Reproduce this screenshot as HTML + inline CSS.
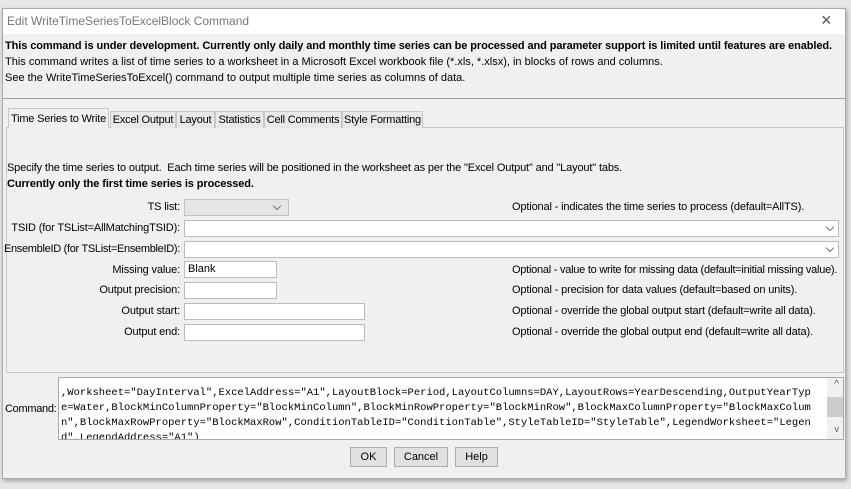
<!DOCTYPE html>
<html><head><style>
*{margin:0;padding:0;box-sizing:border-box}
body{width:851px;height:489px;background:#e6e6e6;font-family:"Liberation Sans",sans-serif;font-size:11px;color:#000;position:relative;overflow:hidden}
.a{position:absolute;white-space:nowrap}
#dlg{position:absolute;left:2px;top:8px;width:844px;height:471px;background:#f0f0f0;border:1px solid #aaa;box-shadow:1px 2px 4px rgba(0,0,0,.3)}
#tb{position:absolute;left:0;top:0;width:842px;height:25px;background:#fff}
.in{position:absolute;background:#fff;border:1px solid #bcbcbc;height:17px;padding:1px 3px}
.r{text-align:right;letter-spacing:-0.15px}
.d{letter-spacing:-0.15px}
.tab{position:absolute;top:102px;height:17px;border:1px solid #c8c8c8;border-bottom:none;background:#e8e8e8;padding:2px 0;font-size:11px;text-align:center;letter-spacing:-0.2px}
.btn{position:absolute;top:438px;height:20px;border:1px solid #adadad;background:#e1e1e1;text-align:center;line-height:18px}
.chev{position:absolute;width:6px;height:6px;border-right:1px solid #777;border-bottom:1px solid #777;transform:rotate(45deg)}
</style></head><body>
<div id="dlg">
<div id="tb"><div class="a" style="left:4px;top:5px;font-size:12px;color:#777">Edit WriteTimeSeriesToExcelBlock Command</div>
<div class="a" style="left:818px;top:1px;font-size:18px;color:#555;font-weight:300">×</div></div>
<div class="a" style="left:2px;top:31px;font-weight:bold;letter-spacing:-0.09px">This command is under development. Currently only daily and monthly time series can be processed and parameter support is limited until features are enabled.</div>
<div class="a" style="left:2px;top:47px">This command writes a list of time series to a worksheet in a Microsoft Excel workbook file (*.xls, *.xlsx), in blocks of rows and columns.</div>
<div class="a" style="left:2px;top:63px">See the WriteTimeSeriesToExcel() command to output multiple time series as columns of data.</div>
<div class="a" style="left:0;top:89px;width:842px;height:1px;background:#a0a0a0"></div>
<div class="a" style="left:3px;top:118px;width:838px;height:246px;border:1px solid #c8c8c8;background:#f0f0f0"></div>
<div class="tab" style="left:5px;width:101px;top:99px;height:20px;background:#f0f0f0;padding-top:4px">Time Series to Write</div>
<div class="tab" style="left:107px;width:66px">Excel Output</div>
<div class="tab" style="left:173px;width:39px">Layout</div>
<div class="tab" style="left:212px;width:49px">Statistics</div>
<div class="tab" style="left:261px;width:78px">Cell Comments</div>
<div class="tab" style="left:339px;width:81px">Style Formatting</div>
<div class="a d" style="left:4px;top:153px">Specify the time series to output.&nbsp; Each time series will be positioned in the worksheet as per the "Excel Output" and "Layout" tabs.</div>
<div class="a" style="left:4px;top:169px;font-weight:bold;letter-spacing:-0.1px">Currently only the first time series is processed.</div>
<div class="a r" style="left:0;width:177px;top:192px">TS list:</div>
<div class="in" style="left:181px;top:190px;width:105px;background:#e5e5e5;border-color:#c0c0c0"></div><div class="chev" style="left:271px;top:194px"></div>
<div class="a r" style="left:0;width:177px;top:213px">TSID (for TSList=AllMatchingTSID):</div>
<div class="in" style="left:181px;top:211px;width:655px"></div><div class="chev" style="left:824px;top:215px"></div>
<div class="a r" style="left:0;width:177px;top:234px;letter-spacing:-0.3px">EnsembleID (for TSList=EnsembleID):</div>
<div class="in" style="left:181px;top:232px;width:655px"></div><div class="chev" style="left:824px;top:236px"></div>
<div class="a r" style="left:0;width:177px;top:255px">Missing value:</div>
<div class="in" style="left:181px;top:252px;width:93px">Blank</div>
<div class="a r" style="left:0;width:177px;top:275px">Output precision:</div>
<div class="in" style="left:181px;top:273px;width:93px"></div>
<div class="a r" style="left:0;width:177px;top:296px">Output start:</div>
<div class="in" style="left:181px;top:294px;width:181px"></div>
<div class="a r" style="left:0;width:177px;top:317px">Output end:</div>
<div class="in" style="left:181px;top:315px;width:181px"></div>
<div class="a d" style="left:509px;top:192px">Optional - indicates the time series to process (default=AllTS).</div>
<div class="a d" style="left:509px;top:255px;letter-spacing:-0.25px">Optional - value to write for missing data (default=initial missing value).</div>
<div class="a d" style="left:509px;top:275px">Optional - precision for data values (default=based on units).</div>
<div class="a d" style="left:509px;top:296px">Optional - override the global output start (default=write all data).</div>
<div class="a d" style="left:509px;top:317px">Optional - override the global output end (default=write all data).</div>
<div class="a" style="left:2px;top:394px;letter-spacing:-0.3px">Command:</div>
<div class="a" style="left:55px;top:368px;width:786px;height:63px;background:#fff;border:1px solid #a8a8a8;overflow:hidden">
<div style="position:absolute;left:2px;top:-7px;font-family:'Liberation Mono',monospace;font-size:10.5px;line-height:15px;white-space:pre">                                                                              
,Worksheet="DayInterval",ExcelAddress="A1",LayoutBlock=Period,LayoutColumns=DAY,LayoutRows=YearDescending,OutputYearTyp
e=Water,BlockMinColumnProperty="BlockMinColumn",BlockMinRowProperty="BlockMinRow",BlockMaxColumnProperty="BlockMaxColum
n",BlockMaxRowProperty="BlockMaxRow",ConditionTableID="ConditionTable",StyleTableID="StyleTable",LegendWorksheet="Legen
d",LegendAddress="A1")</div>
<div style="position:absolute;right:0;top:0;width:16px;height:61px;background:#f0f0f0"><div style="position:absolute;left:0;top:19px;width:16px;height:20px;background:#cdcdcd"></div></div>
<div class="a" style="right:4px;top:1px;font-size:10px;color:#555">^</div>
<div class="a" style="right:4px;top:46px;font-size:9px;color:#555">v</div>
</div>
<div class="btn" style="left:347px;width:37px">OK</div>
<div class="btn" style="left:391px;width:54px">Cancel</div>
<div class="btn" style="left:452px;width:43px">Help</div>
</div>
</body></html>
